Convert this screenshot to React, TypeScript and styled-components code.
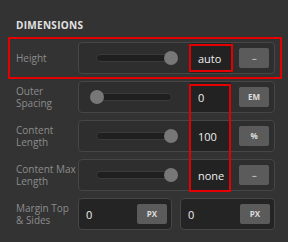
import styled, { createGlobalStyle } from 'styled-components';

const GlobalStyle = createGlobalStyle`
  html, body {
    margin: 0;
    background: #333333;
  }
  body {
    font-family: "Open Sans", "Noto Sans", sans-serif;
  }
`;

type SliderRow = {
  label: string;
  value: string;
  unit: string;
  pct: number;
};

const sliderRows: SliderRow[] = [
  { label: 'Height', value: 'auto', unit: '...', pct: 100 },
  { label: 'Outer\nSpacing', value: '0', unit: 'EM', pct: 0 },
  { label: 'Content\nLength', value: '100', unit: '%', pct: 100 },
  { label: 'Content Max\nLength', value: 'none', unit: '...', pct: 100 },
];

export default function App() {
  return (
    <>
      <GlobalStyle />
      <Panel>
        <Title>DIMENSIONS</Title>
        <Rows>
          {sliderRows.map((row) => (
            <Row key={row.label}>
              <Label>{row.label}</Label>
              <Group>
                <SliderArea>
                  <Track>
                    <Thumb style={{ left: `${row.pct}%` }} />
                  </Track>
                </SliderArea>
                <Value>{row.value}</Value>
                <UnitArea>
                  <UnitButton $dots={row.unit === '...'}>{row.unit}</UnitButton>
                </UnitArea>
              </Group>
            </Row>
          ))}
          <Row>
            <Label>{'Margin Top\n& Sides'}</Label>
            <Pair>
              <Field>
                <FieldValue>0</FieldValue>
                <UnitButton>PX</UnitButton>
              </Field>
              <Field>
                <FieldValue>0</FieldValue>
                <UnitButton>PX</UnitButton>
              </Field>
            </Pair>
          </Row>
        </Rows>

        <Mark $x={8} $y={37} $w={274} $h={42} />
        <Mark $x={189} $y={44} $w={44} $h={28} />
        <Mark $x={189} $y={84} $w={42} $h={108} />
      </Panel>
    </>
  );
}

const Panel = styled.div`
  position: relative;
  width: 288px;
  height: 242px;
  padding: 19px 13px 0 16px;
  box-sizing: border-box;
`;

const Title = styled.div`
  color: #e2e2e2;
  font-size: 10px;
  font-weight: 700;
  line-height: 12px;
  letter-spacing: 0.3px;
  margin-bottom: 11px;
`;

const Rows = styled.div`
  display: flex;
  flex-direction: column;
  gap: 7px;
`;

const Row = styled.div`
  display: grid;
  grid-template-columns: 62px 197px;
  align-items: center;
`;

const Label = styled.div`
  color: #8c8c8c;
  font-size: 10px;
  line-height: 12px;
  white-space: pre-line;
`;

const Group = styled.div`
  display: flex;
  height: 32px;
  box-sizing: border-box;
  border: 1px solid #464646;
  border-radius: 4px;
  background: #2e2e2e;
  overflow: hidden;
`;

const SliderArea = styled.div`
  width: 111px;
  display: flex;
  align-items: center;
  padding: 0 18px 0 17px;
  box-sizing: border-box;
`;

const Track = styled.div`
  position: relative;
  flex: 1;
  height: 8px;
  box-sizing: border-box;
  border-radius: 4px;
  background: #1f1f1f;
  border: 1px solid #3a3a3a;
`;

const Thumb = styled.div`
  position: absolute;
  top: 50%;
  width: 14px;
  height: 14px;
  border-radius: 50%;
  background: #777777;
  transform: translate(-50%, -50%);
`;

const Value = styled.div`
  width: 41px;
  background: #222222;
  color: #eeeeee;
  font-size: 11px;
  display: flex;
  align-items: center;
  padding-left: 8px;
  box-sizing: border-box;
`;

const UnitArea = styled.div`
  flex: 1;
  display: flex;
  align-items: center;
  padding-left: 8px;
`;

const UnitButton = styled.div<{ $dots?: boolean }>`
  width: 30px;
  height: 20px;
  border-radius: 2px;
  background: #5b5b5b;
  color: #dddddd;
  font-size: ${(p) => (p.$dots ? '7px' : '8px')};
  font-weight: 700;
  line-height: ${(p) => (p.$dots ? '16px' : '20px')};
  display: flex;
  align-items: center;
  justify-content: center;
  letter-spacing: ${(p) => (p.$dots ? '-0.6px' : '0')};
`;

const Pair = styled.div`
  display: grid;
  grid-template-columns: 94px 95px;
  gap: 8px;
`;

const Field = styled.div`
  height: 32px;
  box-sizing: border-box;
  border: 1px solid #464646;
  border-radius: 4px;
  background: #242424;
  display: flex;
  align-items: center;
  justify-content: space-between;
  padding: 0 4px 0 7px;
`;

const FieldValue = styled.span`
  color: #eeeeee;
  font-size: 11px;
`;

const Mark = styled.div<{ $x: number; $y: number; $w: number; $h: number }>`
  position: absolute;
  left: ${(p) => p.$x}px;
  top: ${(p) => p.$y}px;
  width: ${(p) => p.$w}px;
  height: ${(p) => p.$h}px;
  box-sizing: border-box;
  border: 2px solid #e40000;
  pointer-events: none;
`;
